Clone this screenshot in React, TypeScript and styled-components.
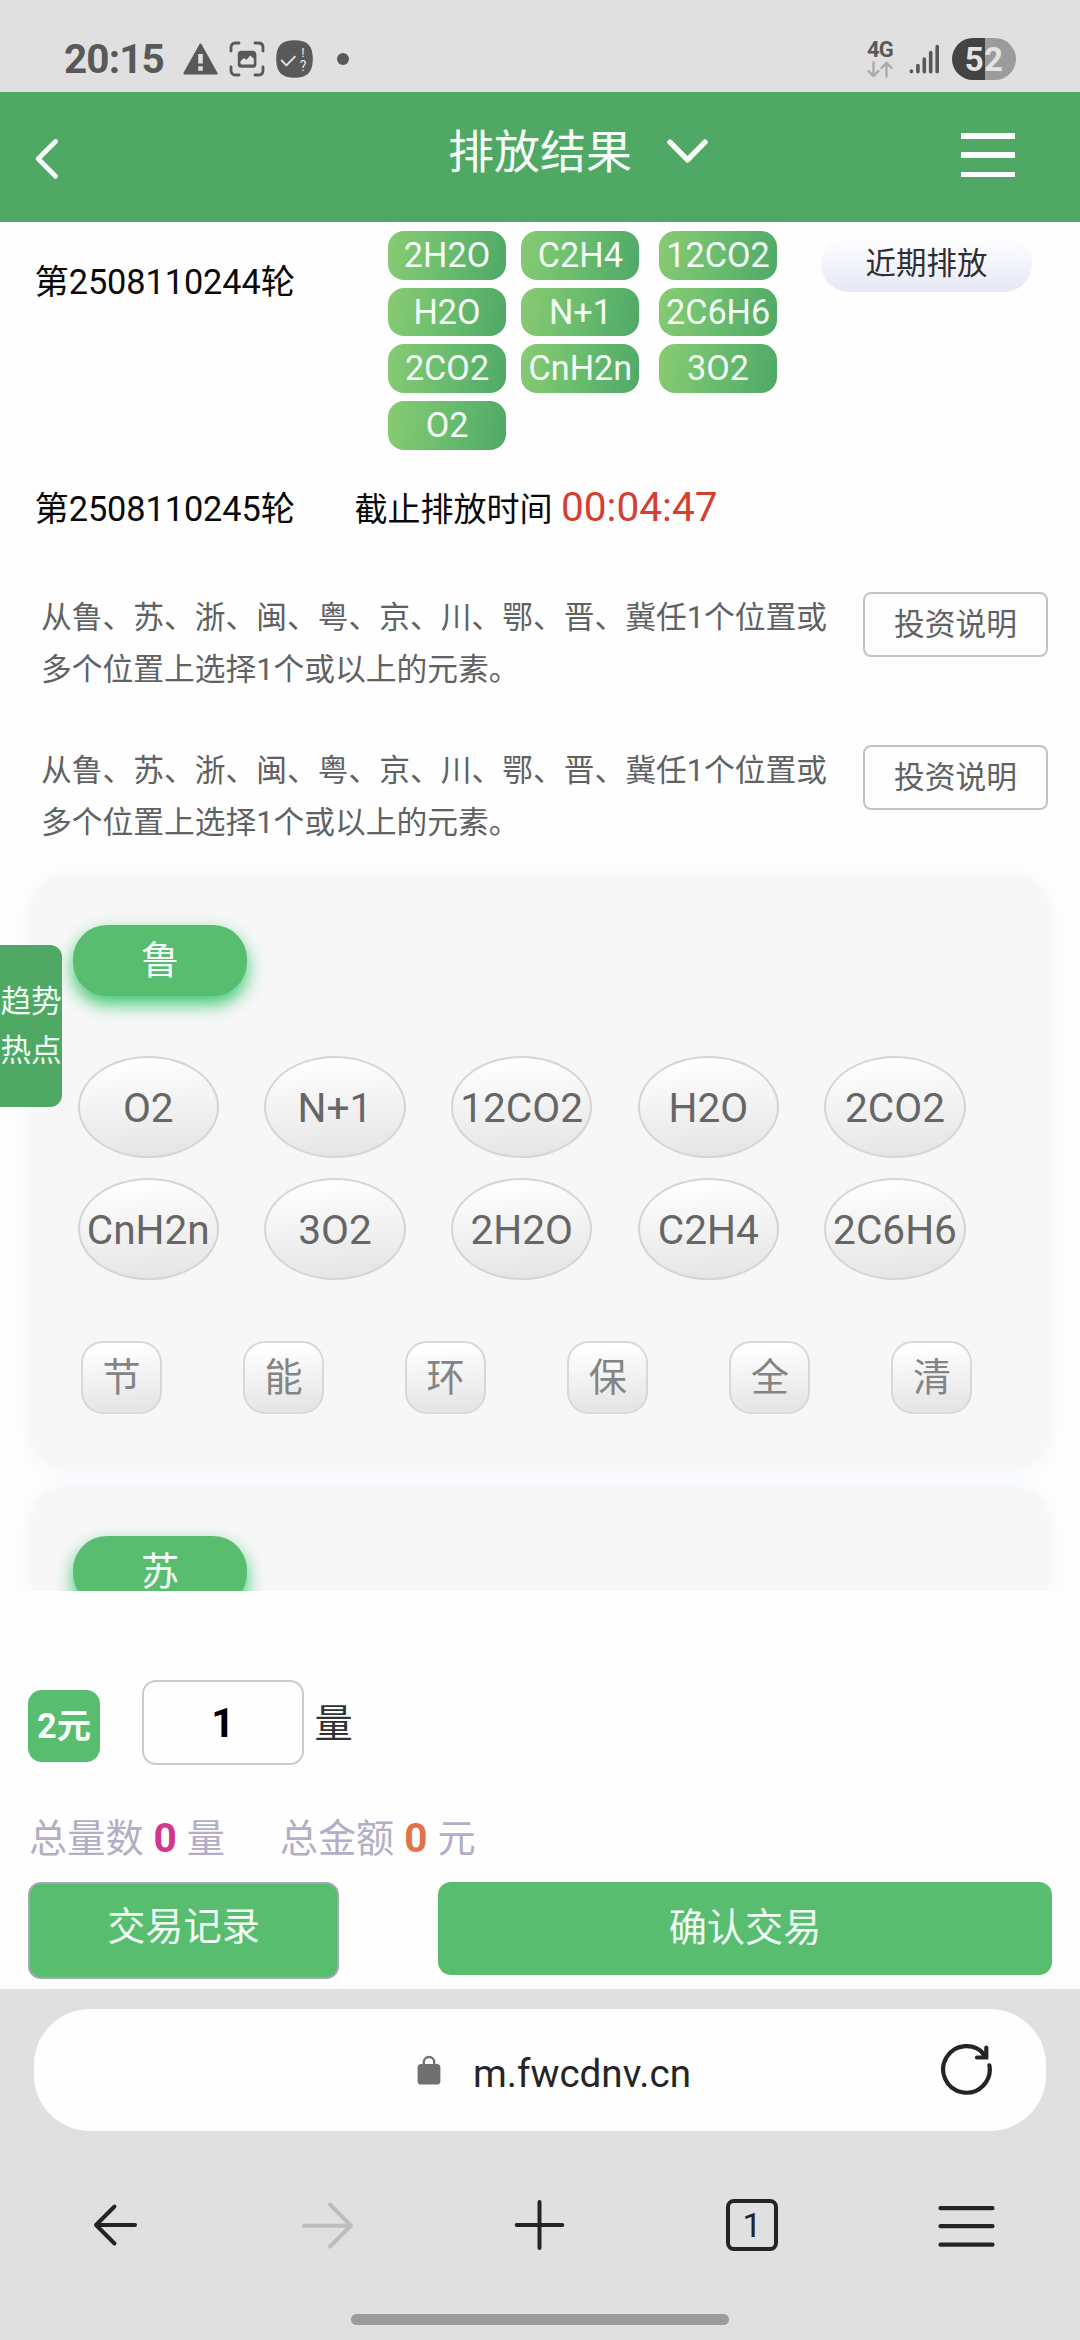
import React from "react";
import styled, { createGlobalStyle } from "styled-components";

const GlobalStyle = createGlobalStyle`
  *, *::before, *::after { box-sizing: border-box; }
  body {
    margin: 0;
    background: #fefefe;
    font-family: Roboto, "Noto Sans CJK SC", sans-serif;
  }
  button, input { font-family: inherit; }
  svg { display: block; flex: none; }
`;

const Screen = styled.div`
  position: relative;
  width: 1080px;
  height: 2340px;
  display: flex;
  flex-direction: column;
  overflow: hidden;
  background: #fefefe;
`;

/* ---------- system status bar ---------- */

const StatusBar = styled.div`
  flex: none;
  height: 92px;
  padding: 26px 64px 0 64px;
  display: flex;
  align-items: center;
  justify-content: space-between;
  background: #e0e0e0;
  color: #595959;
`;

const StatusGroup = styled.div`
  display: flex;
  align-items: center;
`;

const Clock = styled.span`
  width: 119px;
  font-size: 40.5px;
  font-weight: 700;
  line-height: 60px;
  letter-spacing: -0.9px;
`;

const StatusIcons = styled.div`
  display: flex;
  align-items: center;
  gap: 11px;
`;

const Dot = styled.i`
  width: 12px;
  height: 12px;
  margin-left: 13px;
  border-radius: 50%;
  background: #595959;
`;

const Network = styled.div`
  width: 28px;
  display: flex;
  flex-direction: column;
  gap: 2px;
  margin-right: 14px;
  font-size: 22px;
  font-weight: 700;
  line-height: 18px;
  letter-spacing: -0.8px;
`;

const Battery = styled.div`
  width: 64px;
  height: 42px;
  margin-left: 12px;
  border-radius: 21px;
  background: linear-gradient(90deg, #434343 0 33px, #9b9b9b 33px);
  color: #e4e4e4;
  font-size: 33px;
  font-weight: 700;
  line-height: 43px;
  letter-spacing: 0.2px;
  text-align: center;
`;

/* ---------- page header ---------- */

const Header = styled.header`
  flex: none;
  height: 130px;
  padding: 0 65px 0 35px;
  display: flex;
  align-items: flex-start;
  background: #4fa965;
`;

const BackButton = styled.div`
  margin-top: 46px;
`;

const Title = styled.h1`
  margin: 30px 34px 0 389px;
  color: #f8fffb;
  font-size: 46px;
  font-weight: 400;
  line-height: 60px;
  white-space: nowrap;
`;

const TitleArrow = styled.div`
  margin-top: 46px;
`;

const MenuLines = styled.div`
  margin: 41px 0 0 auto;
  width: 54px;
  height: 44px;
  display: flex;
  flex-direction: column;
  justify-content: space-between;

  i {
    height: 5.5px;
    background: #fcfffd;
  }
`;

/* ---------- scroll area ---------- */

const Content = styled.main`
  flex: none;
  height: 1369px;
  overflow: hidden;
  background: #fefefe;
`;

const LastRound = styled.section`
  height: 227px;
  padding-left: 34.5px;
  display: flex;
  align-items: flex-start;
`;

const RoundNo = styled.span<{ $top?: number }>`
  width: 320px;
  margin-top: ${(p) => p.$top ?? 0}px;
  flex: none;
  color: #0a0a0a;
  font-size: 34.3px;
  line-height: 60px;
  letter-spacing: -0.08px;
`;

const ResultGrid = styled.div`
  width: 389px;
  margin: 9px 0 0 33.5px;
  display: grid;
  grid-template-columns: 118px 118px 118px;
  grid-auto-rows: 48.7px;
  column-gap: 15.4px;
  row-gap: 8px;

  & > :nth-child(3n) {
    margin-left: 4.3px;
    margin-right: -4.3px;
  }
`;

const ResultPill = styled.span`
  border-radius: 16px;
  background: linear-gradient(100deg, #86ca72 4%, #6bbd6e 48%, #51aa67 96%);
  color: #f3fff7;
  font-size: 34.2px;
  line-height: 49.4px;
  text-align: center;
  white-space: nowrap;
`;

const RecentButton = styled.button`
  width: 211px;
  height: 56px;
  margin: 14px 0 0 44px;
  padding: 0;
  border: 0;
  border-radius: 28px;
  background: linear-gradient(180deg, #fefefe 0%, #f5f6fb 45%, #e4e8f4 100%);
  color: #2f2f33;
  font-size: 30.5px;
  line-height: 56px;
`;

const Deadline = styled.section`
  margin-top: 28px;
  height: 62px;
  padding-left: 34.5px;
  display: flex;
  align-items: baseline;
`;

const DeadlineLabel = styled.span`
  color: #0a0a0a;
  font-size: 33px;
  line-height: 60px;
`;

const Countdown = styled.span`
  margin-left: 8.5px;
  color: #d4402f;
  font-size: 40.6px;
  line-height: 60px;
`;

const Notice = styled.section<{ $top: number }>`
  margin-top: ${(p) => p.$top}px;
  height: 103.4px;
  padding: 0 32px 0 41px;
  display: flex;
  justify-content: space-between;
`;

const NoticeText = styled.p`
  width: 794px;
  margin: 0;
  color: #606163;
  font-size: 30.75px;
  line-height: 51.7px;
`;

const NoticeButton = styled.button`
  width: 185px;
  height: 65px;
  padding: 0;
  border: 2px solid #c0c4c9;
  border-radius: 8px;
  background: #fefefe;
  color: #606163;
  font-size: 30.75px;
  line-height: 61px;
`;

const Card = styled.section<{ $top: number }>`
  width: 1016px;
  height: 592px;
  margin: ${(p) => p.$top}px 0 0 32px;
  padding: 49.5px 0 0 41px;
  border-radius: 32px;
  background: #f7f7f7;
  box-shadow: 0 3px 20px rgba(205, 220, 235, 0.3);
`;

const PositionTag = styled.div`
  width: 174px;
  height: 71px;
  border-radius: 34px;
  background: #58bd6f;
  box-shadow: 0 8px 17px rgba(50, 196, 105, 0.95);
  color: #f6fffa;
  font-size: 38.2px;
  line-height: 72px;
  text-align: center;
`;

const ElementGrid = styled.div`
  margin: 60px 0 0 4.5px;
  display: grid;
  grid-template-columns: repeat(5, 141.5px);
  grid-auto-rows: 102px;
  column-gap: 45.2px;
  row-gap: 20px;
`;

const ElementButton = styled.button`
  padding: 0;
  border: 2px solid #d5d5d5;
  border-radius: 50%;
  background: linear-gradient(175deg, #ffffff 5%, #e5e5e5 95%);
  color: #666666;
  font-size: 40.6px;
  line-height: 100px;
  white-space: nowrap;
`;

const QuickRow = styled.div`
  margin: 61px 0 0 8px;
  display: flex;
  gap: 81.1px;
`;

const QuickButton = styled.button`
  width: 81px;
  height: 73px;
  padding: 0;
  border: 2px solid #d8d8d8;
  border-radius: 22px;
  background: linear-gradient(175deg, #ffffff 8%, #e5e5e5 92%);
  color: #848484;
  font-size: 38.2px;
  line-height: 70px;
`;

const TrendTab = styled.aside`
  position: absolute;
  left: 0;
  top: 945px;
  width: 62px;
  height: 162px;
  padding-top: 31.5px;
  border-radius: 0 12px 12px 0;
  background: #4fa965;
  color: #edfff4;
  font-size: 30.6px;
  line-height: 49.4px;
  text-align: center;
`;

/* ---------- order panel ---------- */

const OrderPanel = styled.section`
  flex: none;
  height: 398px;
  padding: 89px 28px 0;
  background: #fefefe;
`;

const AmountRow = styled.div`
  height: 85px;
  display: flex;
  align-items: flex-start;
`;

const UnitPrice = styled.div`
  width: 72px;
  height: 72px;
  margin-top: 10px;
  border-radius: 14px;
  background: #58bd6f;
  color: #f6fffa;
  font-size: 34.3px;
  font-weight: 700;
  line-height: 72px;
  text-align: center;
  white-space: nowrap;
`;

const AmountInput = styled.input`
  width: 162px;
  height: 85px;
  margin-left: 42px;
  padding: 0;
  border: 2px solid #cbcbcb;
  border-radius: 14px;
  outline: 0;
  background: #fefefe;
  color: #000000;
  font-size: 40.6px;
  font-weight: 700;
  text-align: center;
`;

const AmountUnit = styled.span`
  margin: 2px 0 0 10.5px;
  color: #303133;
  font-size: 38.2px;
  line-height: 85px;
`;

const Totals = styled.div`
  height: 60px;
  margin-top: 43px;
  padding-left: 1px;
  display: flex;
  color: #b3aec6;
  font-size: 38.2px;
  line-height: 60px;
`;

const Total = styled.div`
  display: flex;
  align-items: baseline;
  width: 250.7px;
`;

const TotalValue = styled.b<{ $color: string }>`
  margin: 0 10px;
  color: ${(p) => p.$color};
  font-size: 40.6px;
`;

const Actions = styled.div`
  margin-top: 14px;
  display: flex;
  align-items: flex-start;
  justify-content: space-between;
`;

const ActionButton = styled.button<{ $width: number; $outlined?: boolean }>`
  width: ${(p) => p.$width}px;
  height: ${(p) => (p.$outlined ? 97 : 93)}px;
  padding: 0 0 ${(p) => (p.$outlined ? 7 : 0)}px;
  border: ${(p) => (p.$outlined ? "2px solid #a0a9b2" : "0")};
  border-radius: 13px;
  background: #58bd6f;
  color: #f0fff6;
  font-size: 38.2px;
  line-height: 85px;
`;

/* ---------- browser chrome ---------- */

const BrowserChrome = styled.footer`
  flex: 1;
  padding: 20px 34px 0;
  display: flex;
  flex-direction: column;
  background: #e0e0e0;
`;

const UrlBar = styled.div`
  height: 122px;
  padding: 0 52px 0 382.5px;
  display: flex;
  align-items: center;
  border-radius: 56px;
  background: #fefefe;
`;

const UrlText = styled.span`
  margin: 7px auto 0 32.5px;
  color: #252525;
  font-size: 38.6px;
  line-height: 60px;
`;

const NavBar = styled.nav`
  height: 54px;
  margin-top: 66.5px;
  padding: 0 51px 0 53px;
  display: flex;
  align-items: center;
  justify-content: space-between;
`;

const TabCount = styled.div`
  width: 52px;
  height: 52px;
  border: 4.5px solid #242424;
  border-radius: 8px;
  color: #242424;
  font-size: 34px;
  line-height: 44px;
  text-align: center;
`;

const HomeIndicator = styled.div`
  width: 378px;
  height: 11px;
  margin: 62px auto 0;
  border-radius: 5.5px;
  background: #9b9b9b;
`;

/* ---------- icons ---------- */

const WarningIcon = () => (
  <svg width="35" height="32" viewBox="0 0 35 32">
    <path d="M17.5 1.8 33.4 30.4H1.6Z" fill="#595959" stroke="#595959" strokeWidth="2.4" strokeLinejoin="round" />
    <path d="M17.5 11v9.5M17.5 23.3v4.5" stroke="#e0e0e0" strokeWidth="4.6" />
  </svg>
);

const ScreenshotIcon = () => (
  <svg width="36" height="36" viewBox="0 0 36 36" fill="none">
    <path
      d="M2 10V6.5Q2 2 6.500 2H10M26 2h3.5Q34 2 34 6.500V10M34 26v3.5Q34 34 29.500 34H26M10 34H6.500Q2 34 2 29.500V26"
      stroke="#595959"
      strokeWidth="2.8"
      strokeLinecap="round"
    />
    <rect x="8.8" y="9.8" width="18.6" height="17" rx="3.6" fill="#595959" />
    <path d="M11.500 22.500v-2.200l3.300-3.300 2.600 1.800 4-4.200 3.400 3.200v4.700q0 1-1 1H12.500q-1 0-1-1Z" fill="#e0e0e0" />
  </svg>
);

const QuizAppIcon = () => (
  <svg width="37" height="38" viewBox="0 0 37 38">
    <path d="M18.500.3C31 .3 36.800 5.500 36.800 19S31 37.700 18.500 37.700.2 32.500.2 19 6 .3 18.500.3Z" fill="#595959" />
    <path d="m5.200 20 5.200 5.400 9-9.200" fill="none" stroke="#e4e4e4" strokeWidth="1.900" />
    <text x="27" y="17" fill="#e4e4e4" fontSize="13.5" fontFamily="Roboto, sans-serif" textAnchor="middle">!</text>
    <text x="27" y="30.5" fill="#e4e4e4" fontSize="14" fontFamily="Roboto, sans-serif" textAnchor="middle">?</text>
  </svg>
);

const DataArrows = () => (
  <svg width="26" height="17" viewBox="0 0 26 17" fill="none" stroke="#ababab" strokeWidth="2.4" strokeLinecap="round" strokeLinejoin="round">
    <path d="M6.5 1.5v13.5M1.500 10l5 5.200 5-5.200M19.500 15.500V2M14.500 7l5-5.200 5 5.200" />
  </svg>
);

const SignalIcon = () => (
  <svg width="31" height="30" viewBox="0 0 31 30" stroke="#595959" strokeWidth="3.6" strokeLinecap="round">
    <path d="M2.400 27v.6M8.900 21.500v6.200M15.300 15v12.700M21.700 8.500v19.200M28.200 2.600v25.100" />
  </svg>
);

const ChevronLeft = () => (
  <svg width="24" height="42" viewBox="0 0 24 42">
    <path d="M20.500 3.500 3.200 20.700 20.500 38.300" fill="none" stroke="#fafffc" strokeWidth="4.8" strokeLinecap="round" strokeLinejoin="round" />
  </svg>
);

const ChevronDown = () => (
  <svg width="43" height="26" viewBox="0 0 43 26">
    <path d="M4 4.200 21.500 21.800 39 4.200" fill="none" stroke="#fafffc" strokeWidth="5.4" strokeLinecap="round" strokeLinejoin="round" />
  </svg>
);

const LockIcon = () => (
  <svg width="24" height="30" viewBox="0 0 24 30">
    <path d="M6.800 11V7.200a5.200 5.200 0 0 1 10.400 0V11" fill="none" stroke="#707070" strokeWidth="2.4" />
    <rect x=".6" y="9" width="22.8" height="20.5" rx="3.6" fill="#707070" />
  </svg>
);

const ReloadIcon = () => (
  <svg width="54" height="54" viewBox="0 0 54 54" fill="none" stroke="#242424" strokeWidth="4.2" strokeLinecap="round">
    <path d="M49.400 22.300A23.300 23.300 0 1 1 44.800 12" />
    <path d="M46.300 4.700V14.500H37" />
    <path d="m42 9.500 3.500 4" />
  </svg>
);

const NavBack = () => (
  <svg width="54" height="54" viewBox="0 0 54 54" fill="none" stroke="#242424" strokeWidth="4" strokeLinecap="round" strokeLinejoin="round">
    <path d="M27.500 8.500 9 27l18.500 18.500M9 27h39" />
  </svg>
);

const NavForward = () => (
  <svg width="54" height="54" viewBox="0 0 54 54" fill="none" stroke="#bdbdbd" strokeWidth="4" strokeLinecap="round" strokeLinejoin="round">
    <path d="M30 6.500 51 27.700 30 48.500M51 27.700H4" />
  </svg>
);

const NavPlus = () => (
  <svg width="54" height="54" viewBox="0 0 54 54" stroke="#242424" strokeWidth="4" strokeLinecap="round">
    <path d="M26.500 4v46M3.700 27h45.600" />
  </svg>
);

const NavMenu = () => (
  <svg width="58" height="54" viewBox="0 0 58 54" stroke="#242424" strokeWidth="4.2" strokeLinecap="round">
    <path d="M3.500 10.200h52M3.500 28.200h52M3.500 46.700h52" />
  </svg>
);

/* ---------- data ---------- */

const results = ["2H2O", "C2H4", "12CO2", "H2O", "N+1", "2C6H6", "2CO2", "CnH2n", "3O2", "O2"];
const elements = ["O2", "N+1", "12CO2", "H2O", "2CO2", "CnH2n", "3O2", "2H2O", "C2H4", "2C6H6"];
const quickPicks = ["节", "能", "环", "保", "全", "清"];
const positions = [
  { name: "鲁", top: 27.1, open: true },
  { name: "苏", top: 19.2, open: false },
];
const noticeTops = [53, 49.6];

export default function App() {
  return (
    <>
      <GlobalStyle />
      <Screen>
        <StatusBar>
          <StatusGroup>
            <Clock>20:15</Clock>
            <StatusIcons>
              <WarningIcon />
              <ScreenshotIcon />
              <QuizAppIcon />
              <Dot />
            </StatusIcons>
          </StatusGroup>
          <StatusGroup>
            <Network>
              4G
              <DataArrows />
            </Network>
            <SignalIcon />
            <Battery>52</Battery>
          </StatusGroup>
        </StatusBar>

        <Header>
          <BackButton>
            <ChevronLeft />
          </BackButton>
          <Title>排放结果</Title>
          <TitleArrow>
            <ChevronDown />
          </TitleArrow>
          <MenuLines>
            <i />
            <i />
            <i />
          </MenuLines>
        </Header>

        <Content>
          <LastRound>
            <RoundNo $top={30}>第2508110244轮</RoundNo>
            <ResultGrid>
              {results.map((r) => (
                <ResultPill key={r}>{r}</ResultPill>
              ))}
            </ResultGrid>
            <RecentButton>近期排放</RecentButton>
          </LastRound>

          <Deadline>
            <RoundNo>第2508110245轮</RoundNo>
            <DeadlineLabel>截止排放时间</DeadlineLabel>
            <Countdown>00:04:47</Countdown>
          </Deadline>

          {noticeTops.map((top) => (
            <Notice key={top} $top={top}>
              <NoticeText>从鲁、苏、浙、闽、粤、京、川、鄂、晋、冀任1个位置或多个位置上选择1个或以上的元素。</NoticeText>
              <NoticeButton>投资说明</NoticeButton>
            </Notice>
          ))}

          {positions.map((p) => (
            <Card key={p.name} $top={p.top}>
              <PositionTag>{p.name}</PositionTag>
              {p.open && (
                <>
                  <ElementGrid>
                    {elements.map((e) => (
                      <ElementButton key={e}>{e}</ElementButton>
                    ))}
                  </ElementGrid>
                  <QuickRow>
                    {quickPicks.map((q) => (
                      <QuickButton key={q}>{q}</QuickButton>
                    ))}
                  </QuickRow>
                </>
              )}
            </Card>
          ))}
        </Content>

        <OrderPanel>
          <AmountRow>
            <UnitPrice>2元</UnitPrice>
            <AmountInput defaultValue="1" />
            <AmountUnit>量</AmountUnit>
          </AmountRow>
          <Totals>
            <Total>
              总量数<TotalValue $color="#d2378c">0</TotalValue>量
            </Total>
            <Total>
              总金额<TotalValue $color="#e1724a">0</TotalValue>元
            </Total>
          </Totals>
          <Actions>
            <ActionButton $width={311} $outlined>
              交易记录
            </ActionButton>
            <ActionButton $width={614}>确认交易</ActionButton>
          </Actions>
        </OrderPanel>

        <BrowserChrome>
          <UrlBar>
            <LockIcon />
            <UrlText>m.fwcdnv.cn</UrlText>
            <ReloadIcon />
          </UrlBar>
          <NavBar>
            <NavBack />
            <NavForward />
            <NavPlus />
            <TabCount>1</TabCount>
            <NavMenu />
          </NavBar>
          <HomeIndicator />
        </BrowserChrome>

        <TrendTab>
          趋势
          <br />
          热点
        </TrendTab>
      </Screen>
    </>
  );
}
